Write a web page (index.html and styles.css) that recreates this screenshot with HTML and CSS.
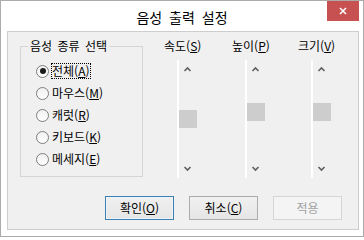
FILE: index.html
```html
<!DOCTYPE html>
<html lang="ko">
<head>
<meta charset="utf-8">
<title>음성 출력 설정</title>
<link rel="stylesheet" href="styles.css">
</head>
<body>
<div class="window">
  <div class="titlebar">
    <span class="spacer"></span>
    <span class="title">음성 출력 설정</span>
    <span class="close-wrap">
      <span class="close">
        <svg width="8" height="8" viewBox="0 0 8 8"><path d="M1 1 L7 7 M7 1 L1 7" stroke="#fff" stroke-width="1.6" fill="none"/></svg>
      </span>
    </span>
  </div>
  <div class="panel">
    <div class="top">
      <fieldset class="group">
        <legend>음성 종류 선택</legend>
        <div class="radio-row"><span class="radio checked"></span><span class="rlabel focus">전체(<u>A</u>)</span></div>
        <div class="radio-row"><span class="radio"></span><span class="rlabel">마우스(<u>M</u>)</span></div>
        <div class="radio-row"><span class="radio"></span><span class="rlabel">캐럿(<u>R</u>)</span></div>
        <div class="radio-row"><span class="radio"></span><span class="rlabel">키보드(<u>K</u>)</span></div>
        <div class="radio-row"><span class="radio"></span><span class="rlabel">메세지(<u>E</u>)</span></div>
      </fieldset>
      <div class="sliders">
        <div class="col">
          <div class="clabel">속도(<u>S</u>)</div>
          <div class="sbar">
            <svg class="arrow" width="18" height="17" viewBox="0 0 18 17"><polyline points="5.5,11 8.5,8 11.5,11" fill="none" stroke="#5f5f5f" stroke-width="1.6"/></svg>
            <div class="track"><div class="thumb" style="margin-top:33px"></div></div>
            <svg class="arrow" width="18" height="17" viewBox="0 0 18 17"><polyline points="5.5,6 8.5,9 11.5,6" fill="none" stroke="#5f5f5f" stroke-width="1.6"/></svg>
          </div>
        </div>
        <div class="col">
          <div class="clabel">높이(<u>P</u>)</div>
          <div class="sbar">
            <svg class="arrow" width="18" height="17" viewBox="0 0 18 17"><polyline points="5.5,11 8.5,8 11.5,11" fill="none" stroke="#5f5f5f" stroke-width="1.6"/></svg>
            <div class="track"><div class="thumb" style="margin-top:26px"></div></div>
            <svg class="arrow" width="18" height="17" viewBox="0 0 18 17"><polyline points="5.5,6 8.5,9 11.5,6" fill="none" stroke="#5f5f5f" stroke-width="1.6"/></svg>
          </div>
        </div>
        <div class="col">
          <div class="clabel">크기(<u>V</u>)</div>
          <div class="sbar">
            <svg class="arrow" width="18" height="17" viewBox="0 0 18 17"><polyline points="5.5,11 8.5,8 11.5,11" fill="none" stroke="#5f5f5f" stroke-width="1.6"/></svg>
            <div class="track"><div class="thumb" style="margin-top:26px"></div></div>
            <svg class="arrow" width="18" height="17" viewBox="0 0 18 17"><polyline points="5.5,6 8.5,9 11.5,6" fill="none" stroke="#5f5f5f" stroke-width="1.6"/></svg>
          </div>
        </div>
      </div>
    </div>
    <div class="buttons">
      <div class="btn default">확인(<u>O</u>)</div>
      <div class="btn">취소(<u>C</u>)</div>
      <div class="btn disabled">적용</div>
    </div>
  </div>
</div>
</body>
</html>
```
FILE: styles.css
```css
html, body {
  margin: 0;
  padding: 0;
  background: #ffffff;
}
body {
  font-family: "Noto Sans CJK KR", "Noto Sans", sans-serif;
  font-size: 12px;
  color: #000;
}
.window {
  width: 364px;
  height: 237px;
  box-sizing: border-box;
  border: 1px solid #ababab;
  background: #ffffff;
  display: flex;
  flex-direction: column;
}
.titlebar {
  height: 30px;
  display: grid;
  grid-template-columns: 1fr auto 1fr;
  align-items: center;
}
.title {
  font-size: 14px;
  line-height: 18px;
  word-spacing: 3px;
  padding-top: 2px;
}
.close-wrap {
  justify-self: end;
  align-self: start;
  margin-right: 4px;
}
.close {
  width: 32px;
  height: 20px;
  background: #c75050;
  display: flex;
  align-items: center;
  justify-content: center;
}
.panel {
  margin: 0 4px 0 6px;
  height: 199px;
  box-sizing: border-box;
  border: 1px solid #cdcdcd;
  background: #f0f0f0;
  display: flex;
  flex-direction: column;
}
.top {
  display: flex;
  align-items: flex-start;
  margin-top: 6px;
  padding-left: 12px;
}
.group {
  margin: 0;
  width: 123px;
  box-sizing: border-box;
  border: 1px solid #d5d5d5;
  padding: 6px 0 6px 0;
  min-width: 0;
}
.group legend {
  margin-left: 7px;
  padding: 0 2px;
  line-height: 16px;
  font-size: 12px;
  word-spacing: 2px;
  margin-bottom: 0;
}
.radio-row {
  height: 22px;
  display: flex;
  align-items: center;
  padding-left: 15px;
}
.radio {
  width: 13px;
  height: 13px;
  box-sizing: border-box;
  border-radius: 50%;
  border: 1px solid #7e7e7e;
  background: linear-gradient(#f0f0f0, #ffffff);
  display: flex;
  align-items: center;
  justify-content: center;
  flex: none;
}
.radio.checked::after {
  content: "";
  width: 6px;
  height: 6px;
  border-radius: 50%;
  background: #1a1a1a;
}
.rlabel {
  margin-left: 2px;
  border: 1px dotted transparent;
  line-height: 14px;
  white-space: nowrap;
}
.rlabel.focus {
  border-color: #000;
}
.sliders {
  display: grid;
  grid-template-columns: 68px 66px 60px;
  margin-left: 21px;
}
.col {
  display: flex;
  flex-direction: column;
}
.clabel {
  line-height: 16px;
  white-space: nowrap;
}
.sbar {
  margin-top: 6px;
  margin-left: 13px;
  width: 20px;
  height: 118px;
  box-sizing: border-box;
  border-left: 2px solid #ffffff;
  display: flex;
  flex-direction: column;
}
.arrow {
  display: block;
  flex: none;
}
.track {
  flex: 1;
}
.thumb {
  width: 18px;
  height: 18px;
  background: #cdcdcd;
}
.buttons {
  display: flex;
  justify-content: flex-end;
  gap: 15px;
  margin-top: 18px;
  padding-right: 16px;
}
.btn {
  width: 69px;
  height: 24px;
  box-sizing: border-box;
  border: 1px solid #acacac;
  background: linear-gradient(#f0f0f0, #e5e5e5);
  text-align: center;
  line-height: 21px;
  white-space: nowrap;
}
.btn.default {
  border-color: #3c7fb1;
  box-shadow: inset 0 0 0 1px #eef4fa;
}
.btn.disabled {
  border-color: #d5d5d5;
  background: #f4f4f4;
  color: #a0a0a0;
}
u {
  text-decoration: underline;
  text-underline-offset: 1px;
}
```
